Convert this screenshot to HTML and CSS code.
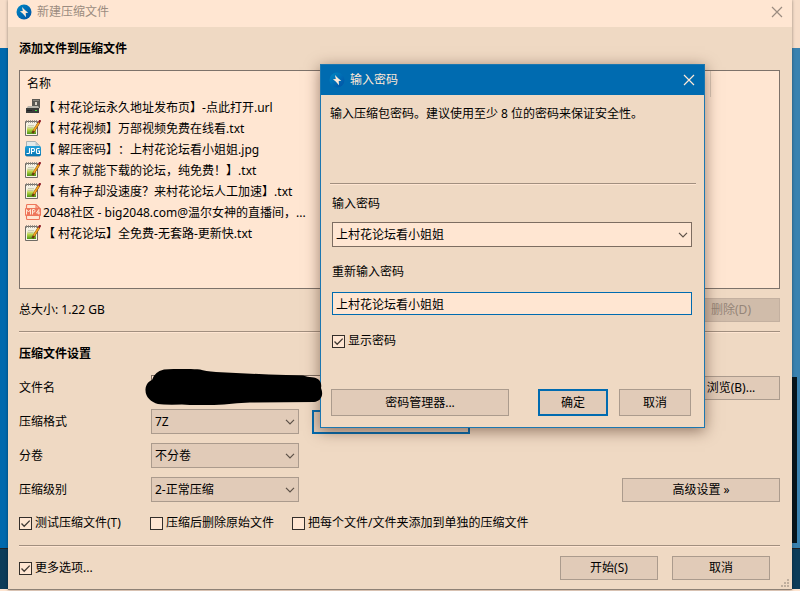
FILE: index.html
```html
<!DOCTYPE html>
<html lang="zh-CN">
<head>
<meta charset="utf-8">
<meta name="viewport" content="width=device-width, initial-scale=1">
<title>新建压缩文件</title>
<link rel="stylesheet" href="styles.css">
</head>
<body>
<svg class="defs" aria-hidden="true">
  <defs>
    <linearGradient id="page-fill" x1="0" y1="0" x2="0" y2="1">
      <stop offset="0.25" stop-color="#f4f1e3"/><stop offset="0.6" stop-color="#b7d345"/><stop offset="1" stop-color="#4b9618"/>
    </linearGradient>
    <linearGradient id="jpg-fill" x1="0" y1="0" x2="0" y2="1">
      <stop offset="0" stop-color="#25a0d8"/><stop offset="1" stop-color="#0877b4"/>
    </linearGradient>
    <linearGradient id="logo-fill" x1="0" y1="0" x2="1" y2="1">
      <stop offset="0" stop-color="#0089c4"/><stop offset="1" stop-color="#0050a4"/>
    </linearGradient>
    <symbol id="logo" viewBox="0 0 16 16">
      <circle cx="8" cy="8" r="7.5" fill="url(#logo-fill)"/>
      <path d="M6 3 9.400 6.500 12.300 8.700 9.700 9 10 13.200 6.700 9.600 3.900 7.300 6.800 6.900z" fill="#ffe9d7"/>
    </symbol>
    <symbol id="chevron" viewBox="0 0 10 6">
      <path d="M1 .8 5 4.8 9 .8" fill="none" stroke="#5c5148" stroke-width="1.2"/>
    </symbol>
    <symbol id="close" viewBox="0 0 12 12">
      <path d="M1 1 11 11M11 1 1 11" fill="none" stroke="currentColor" stroke-width="1.2"/>
    </symbol>
    <symbol id="icon-url" viewBox="0 0 16 16">
      <path d="M7 0h8v9H7z" fill="#5b5954"/><path d="M8 1h6v1H8z" fill="#89857d"/><path d="M10 3h2v3h-2z" fill="#d9d1c6"/>
      <path d="M3 7h10l2 3H1z" fill="#b9b5ac"/><path d="M1 9h13v5H1z" fill="#3b3c3a"/>
      <path d="M10 11h2v1h-2z" fill="#35d838"/><path d="M2 11h5v1H2z" fill="#222"/>
    </symbol>
    <symbol id="icon-txt" viewBox="0 0 16 16">
      <path d="M.5 1.500h12v14H.5z" fill="#faf5e8" stroke="#6f6b65"/>
      <path d="M2 3h9v11H2z" fill="url(#page-fill)"/>
      <path d="M1.500 0v3M3.500 0v3M5.500 0v3M7.500 0v3M9.500 0v3M11.500 0v3" stroke="#8a8680" stroke-width=".8"/>
      <path d="M3 5.500h6M3 7.500h5" stroke="#bdbba3" stroke-width=".7"/>
      <path d="M14 2.500 8.700 11 7.500 13.300" fill="none" stroke="#6b3d0d" stroke-width="2.400"/>
      <path d="M14 2.500 8.700 10.800" fill="none" stroke="#f5a522" stroke-width="1.700"/>
      <path d="M13.800 2.700 15.400.2" stroke="#8c1720" stroke-width="2.200"/>
    </symbol>
    <symbol id="icon-jpg" viewBox="0 0 16 16">
      <path d="M1.500.5h9l4 4v11h-13z" fill="#e4e9e8" stroke="#a9b2b5"/>
      <path d="M10.500.5v4h4z" fill="#b9c4c8"/>
      <rect y="5" width="16" height="10" rx="1.500" fill="url(#jpg-fill)"/>
      <path d="M4.500 7v4.500q0 1-1 1H1.500M6.500 13V7.500H8.500q1 0 1 1.500t-1 1.500h-2M14.500 7.500H12.500q-1 0-1 1v3q0 1 1 1h2v-2.500h-1.500" fill="none" stroke="#fff" stroke-width="1.100"/>
    </symbol>
    <symbol id="icon-mp4" viewBox="0 0 16 16">
      <path d="M1.500 5V1.500q0-1 1-1H11L14.500 4v1M11 .5V4h3.500M1.500 12v2.500q0 1 1 1h11q1 0 1-1V12" fill="none" stroke="#ee765b" stroke-width="1.100"/>
      <rect y="4" width="16" height="8" rx="1" fill="#ee765b"/>
      <path d="M1.500 10.500v-5L3.500 8l2-2.500v5M7.500 10.500V5.500H9q1 0 1 1.250T9 8H7.500M13.800 10.500V5.500L11.500 9H15" fill="none" stroke="#ffe9d7" stroke-width="1"/>
    </symbol>
  </defs>
</svg>

<div class="desktop" aria-hidden="true">
  <div class="desktop-top"></div>
  <div class="desktop-middle"><div class="desktop-panel"></div></div>
  <div class="desktop-bottom"></div>
</div>

<main class="window">
  <header class="titlebar">
    <svg class="logo"><use href="#logo"/></svg>
    <h1>新建压缩文件</h1>
    <button class="close" type="button" aria-label="关闭"><svg><use href="#close"/></svg></button>
  </header>

  <form class="content">
    <h2>添加文件到压缩文件</h2>
    <div class="filebox">
      <table class="files">
        <thead><tr><th scope="col">名称</th></tr></thead>
        <tbody>
          <tr><td><svg><use href="#icon-url"/></svg>【 村花论坛永久地址发布页】-点此打开.url</td></tr>
          <tr><td><svg><use href="#icon-txt"/></svg>【 村花视频】万部视频免费在线看.txt</td></tr>
          <tr><td><svg><use href="#icon-jpg"/></svg>【 解压密码】：上村花论坛看小姐姐.jpg</td></tr>
          <tr><td><svg><use href="#icon-txt"/></svg>【 来了就能下载的论坛，纯免费！】.txt</td></tr>
          <tr><td><svg><use href="#icon-txt"/></svg>【 有种子却没速度？来村花论坛人工加速】.txt</td></tr>
          <tr><td><svg><use href="#icon-mp4"/></svg>2048社区 - big2048.com@温尔女神的直播间，...</td></tr>
          <tr><td><svg><use href="#icon-txt"/></svg>【 村花论坛】全免费-无套路-更新快.txt</td></tr>
        </tbody>
      </table>
    </div>
    <div class="summary">
      <span>总大小: 1.22 GB</span>
      <button class="btn" type="button" disabled>删除(D)</button>
    </div>
    <hr>
    <h2>压缩文件设置</h2>
    <div class="settings">
      <div class="row">
        <label for="filename">文件名</label>
        <div class="field filename">
          <input id="filename" type="text">
          <svg class="scribble" viewBox="0 0 178 36" aria-hidden="true"><path d="M19 .5C30-.5 47 0 55 .5Q60 2 71 3L124 5.500 158 6.500Q162 8 169 8.500C175 10 177 14 176 19 179 26 176 32 169 33L105 33.500Q92 34 79 35.500 55 37 37 35.500 20 36 13 35C6 33 0 28 .5 20 1 15 4 12 7 11Q9 3 19 .5Z"/></svg>
        </div>
        <button class="btn" type="button">浏览(B)...</button>
      </div>
      <div class="row">
        <label for="format">压缩格式</label>
        <div class="field combo"><select id="format"><option>7Z</option></select><svg><use href="#chevron"/></svg></div>
        <button class="btn wide primary" type="button" aria-label="密码"></button>
      </div>
      <div class="row">
        <label for="volume">分卷</label>
        <div class="field combo"><select id="volume"><option>不分卷</option></select><svg><use href="#chevron"/></svg></div>
      </div>
      <div class="row">
        <label for="level">压缩级别</label>
        <div class="field combo"><select id="level"><option>2-正常压缩</option></select><svg><use href="#chevron"/></svg></div>
        <button class="btn wide push" type="button">高级设置 »</button>
      </div>
    </div>
    <div class="checks">
      <label class="check"><input type="checkbox" checked>测试压缩文件(T)</label>
      <label class="check"><input type="checkbox">压缩后删除原始文件</label>
      <label class="check"><input type="checkbox">把每个文件/文件夹添加到单独的压缩文件</label>
    </div>
    <hr>
    <footer class="footer">
      <label class="check"><input type="checkbox" checked>更多选项...</label>
      <button class="btn push" type="button">开始(S)</button>
      <button class="btn" type="button">取消</button>
    </footer>
  </form>
  <svg class="grip" viewBox="0 0 9 9" aria-hidden="true"><path d="M6 0h2v2H6zM3 3h2v2H3zM6 3h2v2H6zM0 6h2v2H0zM3 6h2v2H3zM6 6h2v2H6z" fill="#bfae9d"/></svg>
</main>

<form class="dialog" role="dialog" aria-labelledby="dialog-title">
  <header class="dialog-title">
    <svg class="logo"><use href="#logo"/></svg>
    <h2 id="dialog-title">输入密码</h2>
    <button class="close" type="button" aria-label="关闭"><svg><use href="#close"/></svg></button>
  </header>
  <div class="dialog-body">
    <p>输入压缩包密码。建议使用至少 8 位的密码来保证安全性。</p>
    <hr>
    <div class="fields">
      <label for="password">输入密码</label>
      <div class="combo light"><select id="password"><option>上村花论坛看小姐姐</option></select><svg><use href="#chevron"/></svg></div>
      <label for="confirm">重新输入密码</label>
      <input id="confirm" type="text" value="上村花论坛看小姐姐">
      <label class="check"><input type="checkbox" checked>显示密码</label>
    </div>
    <div class="actions">
      <button class="btn manager" type="button">密码管理器...</button>
      <button class="btn primary" type="button">确定</button>
      <button class="btn" type="button">取消</button>
    </div>
  </div>
</form>
</body>
</html>
```
FILE: styles.css
```css
:root {
  --face: #efd9c3;
  --light: #ffe6d2;
  --button: #e1cbb8;
  --edge: #ab9b8d;
  --blue: #006bb0;
}

* {
  box-sizing: border-box;
}

body {
  margin: 0;
  position: relative;
  min-height: 100vh;
  overflow: hidden;
  background: var(--light);
  color: #000;
  font: 12px/16px "Noto Sans", "Noto Sans CJK SC", sans-serif;
  text-spacing-trim: space-all;
}

h1, h2, p {
  margin: 0;
  font-size: 12px;
  line-height: 16px;
}

h1, .dialog h2 {
  font-weight: 400;
}

button, input, select {
  font: inherit;
  color: inherit;
  margin: 0;
  border-radius: 0;
}

svg {
  display: block;
  flex: none;
}

.defs {
  position: absolute;
  width: 0;
  height: 0;
}

hr {
  width: 100%;
  height: 2px;
  margin: 0;
  border: 0;
  border-top: 1px solid #a18f7f;
  background: var(--light);
}

/* Desktop behind the windows */
.desktop {
  position: absolute;
  inset: 0;
  display: grid;
  grid-template-rows: 48px 1fr 41px 2px;
}

.desktop-top {
  background: #f6ddc9;
}

.desktop-middle {
  display: flex;
  align-items: flex-end;
  justify-content: flex-end;
  padding: 0 3px 5px 0;
  background: linear-gradient(90deg, #0069ad 50%, #3a82b0 50%);
}

.desktop-panel {
  width: 8px;
  height: 166px;
  background: #07151c;
}

.desktop-bottom {
  border-top: 1px solid #222;
  background: #0c3c59;
}

/* Main window */
.window {
  position: relative;
  margin: 0 8px;
  background: var(--face);
  border-bottom: 1px solid #8e8175;
  box-shadow: 0 0 3px #0006;
}

.titlebar {
  display: flex;
  align-items: center;
  gap: 5px;
  height: 27px;
  padding: 0 9px 4px 8px;
  background: var(--light);
  color: #9b8c80;
}

.logo {
  width: 16px;
  height: 16px;
}

.close {
  margin-left: auto;
  padding: 0;
  border: 0;
  background: none;
}

.close svg {
  width: 12px;
  height: 12px;
}

.content {
  display: flex;
  flex-direction: column;
  padding: 14px 12px 9px 11px;
}

.filebox {
  height: 219px;
  margin: 13px 0 9px;
  border: 1px solid #7d726a;
  background: var(--light);
}

.files {
  width: 691px;
  border-collapse: collapse;
}

.files th {
  height: 26px;
  padding: 0 7px;
  text-align: left;
  font-weight: 400;
  border-right: 1px solid #d9c7b6;
}

.files td {
  height: 21px;
  padding: 0 5px;
  white-space: nowrap;
}

.files td svg {
  display: inline-block;
  width: 16px;
  height: 16px;
  margin-right: 2px;
  vertical-align: -3px;
}

.summary {
  display: flex;
  align-items: center;
  justify-content: space-between;
  margin-bottom: 9px;
}

.btn {
  width: 98px;
  height: 24px;
  padding: 0;
  border: 1px solid var(--edge);
  background: var(--button);
}

.btn:disabled {
  background: #d0bcaa;
  border-color: #c3b0a0;
  color: #958578;
}

.btn.wide {
  width: 158px;
}

.btn.primary {
  border: 2px solid var(--blue);
}

.push {
  margin-left: auto;
}

.content h2 + .settings {
  margin-top: 13px;
}

.summary + hr + h2 {
  margin-top: 13px;
}

.settings {
  display: grid;
  gap: 9px;
}

.row {
  display: flex;
  align-items: center;
  height: 25px;
}

.row > label {
  width: 132px;
}

.field {
  position: relative;
  width: 148px;
}

.field + .btn:not(.push) {
  margin-left: 13px;
}

.field.filename {
  flex: 1;
}

input[type="text"] {
  display: block;
  width: 100%;
  height: 25px;
  padding: 0 3px;
  border: 1px solid #7d6d61;
  background: var(--light);
  outline: 0;
}

.scribble {
  position: absolute;
  z-index: 3;
  top: -6px;
  left: -6px;
  width: 178px;
  height: 36px;
}

.combo {
  position: relative;
}

.combo select {
  display: block;
  appearance: none;
  width: 100%;
  height: 25px;
  padding: 0 20px 0 3px;
  border: 1px solid var(--edge);
  background: var(--button);
}

.combo svg {
  position: absolute;
  top: 10px;
  right: 4px;
  width: 10px;
  height: 6px;
  pointer-events: none;
}

.combo.light select {
  border-color: #7d6d61;
  background: var(--light);
}

.check {
  display: flex;
  align-items: center;
  gap: 3px;
}

.check input {
  appearance: none;
  width: 13px;
  height: 13px;
  border: 1px solid #332e2a;
  background: var(--light);
}

.check input:checked {
  background: var(--light) url("data:image/svg+xml,%3Csvg xmlns='http://www.w3.org/2000/svg' viewBox='0 0 11 11'%3E%3Cpath d='M1.500 5.500 4.200 8.300 9.700 2.600' fill='none' stroke='%23413a34' stroke-width='1.300'/%3E%3C/svg%3E");
}

.checks {
  display: flex;
  gap: 18px;
  margin: 13px 0 14px;
}

.checks .check:first-child {
  width: 113px;
  white-space: nowrap;
}

.footer {
  display: flex;
  gap: 14px;
  padding: 9px 10px 0 0;
}

.grip {
  position: absolute;
  right: 2px;
  bottom: 1px;
  width: 9px;
  height: 9px;
}

/* Password dialog, floating over the window */
.dialog {
  position: absolute;
  z-index: 2;
  top: 64px;
  left: 40%;
  width: 385px;
  border: 1px solid #1c77b0;
  background: var(--face);
  box-shadow: 0 3px 14px #40201088;
}

.dialog-title {
  display: flex;
  align-items: center;
  gap: 5px;
  height: 30px;
  padding: 0 9px 0 8px;
  background: var(--blue);
  color: #ffe9d7;
}

.dialog-body {
  padding: 11px 8px 11px 9px;
}

.dialog-body p {
  min-height: 77px;
}

.fields {
  display: grid;
  gap: 10px;
  padding: 11px 4px 0 2px;
}

.fields .combo {
  margin-bottom: 7px;
}

.fields input[type="text"] {
  height: 23px;
  margin-top: 2px;
  border-color: var(--blue);
}

.fields .check {
  margin-top: 8px;
}

.actions {
  display: flex;
  gap: 11px;
  padding: 40px 5px 0 1px;
}

.actions .btn {
  width: 72px;
  height: 27px;
}

.actions .btn.primary {
  width: 70px;
}

.actions .manager {
  width: 178px;
  margin-right: auto;
}
```
